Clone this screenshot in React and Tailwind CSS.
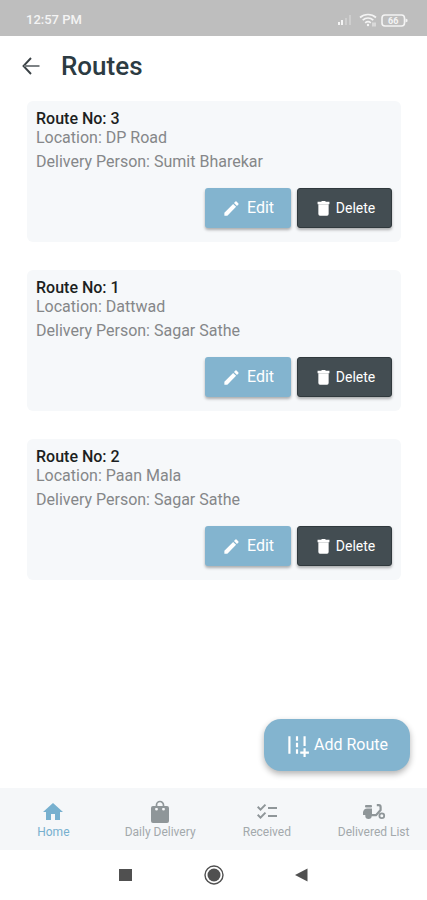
import { MdAddRoad, MdChecklist, MdEdit, MdHome } from "react-icons/md";

const routes = [
  { number: 3, location: "DP Road", person: "Sumit Bharekar" },
  { number: 1, location: "Dattwad", person: "Sagar Sathe" },
  { number: 2, location: "Paan Mala", person: "Sagar Sathe" },
];

const BackArrow = () => (
  <svg width="24" height="24" viewBox="0 0 24 24" fill="none" stroke="currentColor" strokeWidth="1.9">
    <path d="M12 4L4.5 12L12 20" />
    <path d="M5 12h15.5" stroke="#777c7f" />
  </svg>
);

const TrashIcon = () => (
  <svg width="19" height="19" viewBox="0 0 24 24" fill="currentColor">
    <path d="M4.5 3.5H9l1-1h4l1 1h4.5v3h-15z" />
    <path d="M5.5 6.5h13V19a2 2 0 0 1-2 2h-9a2 2 0 0 1-2-2z" />
  </svg>
);

const BagIcon = ({ size }) => (
  <svg width={size} height={size} viewBox="0 0 24 24" fill="currentColor">
    <path
      fillRule="evenodd"
      d="M5 6h14a2 2 0 0 1 2 2v13a2 2 0 0 1-2 2H5a2 2 0 0 1-2-2V8a2 2 0 0 1 2-2zM8.5 7.8a1.4 1.4 0 1 0 0 2.8a1.4 1.4 0 1 0 0-2.8zM15.5 7.8a1.4 1.4 0 1 0 0 2.8a1.4 1.4 0 1 0 0-2.8z"
    />
    <path d="M8.5 8V5a3.5 3.5 0 0 1 7 0v3" fill="none" stroke="currentColor" strokeWidth="1.7" />
  </svg>
);

const ScooterIcon = ({ size }) => (
  <svg width={size} height={size} viewBox="0 0 24 24" fill="currentColor">
    <rect x="3" y="5" width="7" height="2.6" rx="1" />
    <path d="M5.5 8.4H10V15H1v-2.5a4.1 4.1 0 0 1 4.5-4.1z" />
    <circle cx="6.5" cy="15.8" r="3.2" />
    <path d="M9 15.2h5L18.6 10V7a1.8 1.8 0 0 0-1.8-1.8h-2" fill="none" stroke="currentColor" strokeWidth="2.2" />
    <circle cx="19.8" cy="15.8" r="2.4" fill="none" stroke="currentColor" strokeWidth="1.8" />
  </svg>
);

const tabs = [
  { label: "Home", icon: MdHome, active: true },
  { label: "Daily Delivery", icon: BagIcon },
  { label: "Received", icon: MdChecklist },
  { label: "Delivered List", icon: ScooterIcon },
];

const StatusBar = () => (
  <div className="flex h-9 items-center justify-between bg-[#bebebe] pt-1 pr-[19px] pl-[26px] text-[#f4f4f4]">
    <span className="text-[13px] font-medium">12:57 PM</span>
    <div className="flex items-center gap-1">
      <svg width="18" height="12" viewBox="0 0 18 12" fill="currentColor">
        <rect x="1" y="8" width="2" height="3" />
        <rect x="4" y="6" width="2" height="5" />
        <rect x="8" y="4" width="2" height="7" opacity="0.3" />
        <rect x="12" y="1" width="2" height="10" opacity="0.3" />
      </svg>
      <svg width="18" height="14" viewBox="0 0 18 14" fill="none" stroke="currentColor" strokeWidth="1.7">
        <path d="M1 4.5C5.5 0.5 12.5 0.5 17 4.5" />
        <path d="M3.7 7.2C6.8 4.5 11.2 4.5 14.3 7.2" />
        <path d="M6.2 9.8C7.9 8.4 10.1 8.4 11.8 9.8" />
        <circle cx="9" cy="12" r="1.2" fill="currentColor" stroke="none" />
        <path d="M14 9.5v4M16 9.5v4" strokeWidth="1" />
      </svg>
      <svg width="27" height="13" viewBox="0 0 27 13" fill="none">
        <rect x="1" y="1" width="22.5" height="11" rx="3" stroke="currentColor" strokeWidth="1.6" />
        <path d="M24.5 4.5l2 1v2l-2 1z" fill="currentColor" />
        <text x="12.2" y="9.6" textAnchor="middle" fontSize="9" fontWeight="700" fill="currentColor">66</text>
      </svg>
    </div>
  </div>
);

const RouteCard = ({ route }) => (
  <article className="rounded-md bg-[#f6f8fa] px-[9px] pt-[9px] pb-[14px]">
    <h2 className="text-base leading-[18px] font-medium text-[#1c1f22]">Route No: {route.number}</h2>
    <p className="text-base leading-5 text-[#858789]">Location: {route.location}</p>
    <p className="mt-1 text-base leading-5 text-[#858789]">Delivery Person: {route.person}</p>
    <div className="mt-4 flex justify-end gap-[6px]">
      <button
        type="button"
        className="flex h-10 w-[86px] items-center justify-center gap-[6px] rounded-[3px] bg-[#83b4cf] text-base text-white shadow-[0_2px_3px_rgba(0,0,0,0.3)]"
      >
        <MdEdit size={19} />
        Edit
      </button>
      <button
        type="button"
        className="flex h-10 w-[95px] items-center justify-center gap-[3px] rounded-[3px] border border-[#30393d] bg-[#434d52] text-sm text-white shadow-[0_2px_3px_rgba(0,0,0,0.3)]"
      >
        <TrashIcon />
        Delete
      </button>
    </div>
  </article>
);

const BottomNav = () => (
  <nav className="grid h-[62px] grid-cols-4 bg-[#f5f7f9]">
    {tabs.map(({ label, icon: Icon, active }) => (
      <a
        key={label}
        href="#"
        aria-current={active ? "page" : undefined}
        className={`flex flex-col items-center pt-3 whitespace-nowrap ${active ? "text-[#77b0cf]" : "text-[#8f9699]"}`}
      >
        <Icon size={24} />
        <span className={`text-xs leading-4 ${active ? "" : "text-[#a3a9ac]"}`}>{label}</span>
      </a>
    ))}
  </nav>
);

const SystemBar = () => (
  <div className="flex h-[50px] items-center justify-center gap-[70px] bg-white text-[#505050]">
    <button type="button" aria-label="Recent apps">
      <svg width="18" height="20" viewBox="0 0 18 20" fill="currentColor">
        <rect x="3" y="4" width="13" height="12" />
      </svg>
    </button>
    <button type="button" aria-label="Home screen">
      <svg width="20" height="20" viewBox="0 0 20 20" fill="currentColor">
        <circle cx="10" cy="10" r="9" fill="none" stroke="currentColor" strokeWidth="1.4" />
        <circle cx="10" cy="10" r="6.5" />
      </svg>
    </button>
    <button type="button" aria-label="Back">
      <svg width="18" height="20" viewBox="0 0 18 20" fill="currentColor">
        <path d="M1 10L13.5 3.5v13z" />
      </svg>
    </button>
  </div>
);

const App = () => (
  <div className="flex min-h-screen flex-col bg-white font-[Roboto,sans-serif]">
    <StatusBar />
    <header className="flex h-[60px] items-center gap-[18px] pr-5 pl-[19px]">
      <button type="button" aria-label="Go back" className="text-[#3a4145]">
        <BackArrow />
      </button>
      <h1 className="text-[26px] leading-8 font-medium text-[#2c3b42]">Routes</h1>
    </header>
    <main className="flex flex-1 flex-col pt-[5px] pb-[17px]">
      <div className="flex flex-col gap-7 pr-[26px] pl-[27px]">
        {routes.map((route) => (
          <RouteCard key={route.number} route={route} />
        ))}
      </div>
      <button
        type="button"
        className="mt-auto mr-[17px] flex h-[52px] items-center gap-1 self-end rounded-[17px] bg-[#83b4cf] px-[22px] pl-5 text-base text-white shadow-[0_3px_6px_rgba(0,0,0,0.3)]"
      >
        <MdAddRoad size={26} />
        Add Route
      </button>
    </main>
    <BottomNav />
    <SystemBar />
  </div>
);

export default App;
